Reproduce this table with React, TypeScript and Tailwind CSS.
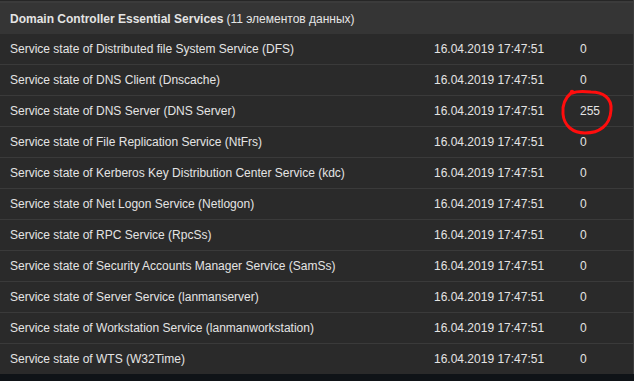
import React from "react"

const rows: { name: string; value: string }[] = [
    { name: "Service state of Distributed file System Service (DFS)", value: "0" },
    { name: "Service state of DNS Client (Dnscache)", value: "0" },
    { name: "Service state of DNS Server (DNS Server)", value: "255" },
    { name: "Service state of File Replication Service (NtFrs)", value: "0" },
    { name: "Service state of Kerberos Key Distribution Center Service (kdc)", value: "0" },
    { name: "Service state of Net Logon Service (Netlogon)", value: "0" },
    { name: "Service state of RPC Service (RpcSs)", value: "0" },
    { name: "Service state of Security Accounts Manager Service (SamSs)", value: "0" },
    { name: "Service state of Server Service (lanmanserver)", value: "0" },
    { name: "Service state of Workstation Service (lanmanworkstation)", value: "0" },
    { name: "Service state of WTS (W32Time)", value: "0" },
]

export default function App() {
    return (
        <div className="w-[634px] h-[381px] bg-[#0f1317] text-[12px] text-[#e4e4e4]" style={{ fontFamily: "Arial, 'Liberation Sans', sans-serif" }}>
            <div className="pt-px bg-[#262626] border-r border-[#3c3c3c]">
                <div className="h-[33px] border-t-2 border-[#3b3b3b] bg-[#353535] flex items-center px-[10px]">
                    <span className="font-bold">Domain Controller Essential Services</span>
                    <span className="ml-[3px]">(11 элементов данных)</span>
                </div>
                {rows.map((row) => (
                    <div key={row.name} className="relative h-[31px] flex items-center bg-[#2a2a2a] border-b border-[#3a3a3a] last:border-b-0 last:h-[30px]">
                        <span className="w-[434px] pl-[10px]">{row.name}</span>
                        <span className="w-[146px]">16.04.2019 17:47:51</span>
                        <span>{row.value}</span>
                        {row.value === "255" && (
                            <svg className="absolute z-10 left-[555px] top-[-10px]" width="65" height="52" viewBox="0 0 65 52" fill="none">
                                <path
                                    d="M17 6 C10 12 7 20 8 28 C9 40 18 47 30 47 C44 47 55 40 56 24 C57 12 48 6 36 6 C28 5 22 5 17 7"
                                    stroke="#ff0d0d"
                                    strokeWidth="3"
                                    strokeLinecap="round"
                                />
                                <circle cx="17" cy="6" r="2.2" fill="#ff0d0d" />
                            </svg>
                        )}
                    </div>
                ))}
            </div>
        </div>
    )
}
